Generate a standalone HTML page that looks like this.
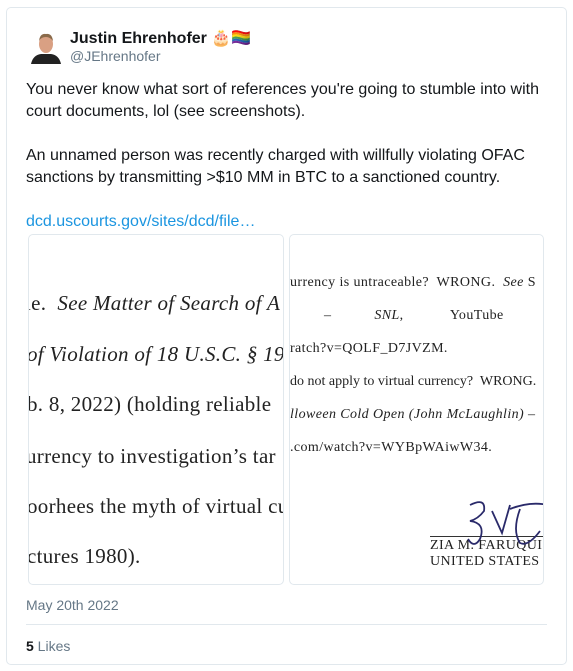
<!DOCTYPE html>
<html><head><meta charset="utf-8"><style>
body{margin:0;background:#fff;font-family:"Liberation Sans",Arial,sans-serif;width:573px;height:671px;position:relative;overflow:hidden}
.card{position:absolute;left:6px;top:7px;width:559px;height:656px;border:1px solid #e1e8ed;border-radius:5px}
.av{position:absolute;left:31px;top:30px;width:30px;height:34px}
.name{position:absolute;left:70px;top:28px;font-weight:bold;font-size:16px;color:#14171a}
.handle{position:absolute;left:70px;top:48px;font-size:14px;color:#657786}
.txt{position:absolute;left:26px;top:79px;font-size:16px;line-height:22px;color:#14171a;width:530px}
.link{color:#1b95e0}
.img{position:absolute;top:234px;height:349px;border:1px solid #e1e8ed;border-radius:5px;overflow:hidden;background:#fff;font-family:"Liberation Serif",serif;color:#222}
.l div{position:absolute;left:0;white-space:nowrap;font-size:21px;letter-spacing:0.3px}
.r div{position:absolute;left:0;white-space:nowrap;font-size:14px;letter-spacing:0.4px}
.date{position:absolute;left:26px;top:597px;font-size:14px;color:#657786}
.hr{position:absolute;left:26px;top:624px;width:521px;height:1px;background:#e1e8ed}
.likes{position:absolute;left:26px;top:638px;font-size:14px;color:#657786}
</style></head><body>
<div class="card"></div>
<svg class="av" viewBox="0 0 30 34"><rect width="30" height="34" fill="#fff"/><path d="M0 34 Q2 25 10 24 L20 24 Q28 25 30 34Z" fill="#222"/><ellipse cx="15" cy="14" rx="7" ry="9" fill="#d9a083"/><path d="M8 11 Q9 3 15 4 Q21 3 22 11 Q19 7 15 7 Q10 7 8 11Z" fill="#8a6a4a"/></svg>
<div class="name">Justin Ehrenhofer 🎂🏳️‍🌈</div>
<div class="handle">@JEhrenhofer</div>
<div class="txt">You never know what sort of references you're going to stumble into with court documents, lol (see screenshots).<br><br>An unnamed person was recently charged with willfully violating OFAC sanctions by transmitting &gt;$10 MM in BTC to a sanctioned country.<br><br><span class="link">dcd.uscourts.gov/sites/dcd/file…</span></div>
<div class="img l" style="left:28px;width:254px">
<div style="top:56px;left:-4px">le.&nbsp; <i>See Matter of Search of A</i></div>
<div style="top:107px;left:-2px"><i>of Violation of 18 U.S.C. § 19</i></div>
<div style="top:157px;left:-2px">b. 8, 2022) (holding reliable</div>
<div style="top:209px;left:-3px">urrency to investigation’s tar</div>
<div style="top:259px;left:-2px">oorhees the myth of virtual cu</div>
<div style="top:309px;left:-2px">ctures 1980).</div>
</div>
<div class="img r" style="left:289px;width:253px">
<div style="top:40px">urrency is untraceable?&nbsp; WRONG.&nbsp; <i>See</i> S</div>
<div style="top:73px;left:34px">–&nbsp;&nbsp;&nbsp;&nbsp;&nbsp;&nbsp;&nbsp;&nbsp;&nbsp;&nbsp;&nbsp;<i>SNL</i>,&nbsp;&nbsp;&nbsp;&nbsp;&nbsp;&nbsp;&nbsp;&nbsp;&nbsp;&nbsp;&nbsp; YouTube&nbsp;&nbsp;&nbsp;&nbsp;&nbsp;&nbsp;&nbsp;&nbsp;&nbsp;&nbsp;&nbsp; (C</div>
<div style="top:106px">ratch?v=QOLF_D7JVZM.</div>
<div style="top:139px;letter-spacing:0">do not apply to virtual currency?&nbsp; WRONG.</div>
<div style="top:172px"><i>lloween Cold Open (John McLaughlin) –</i></div>
<div style="top:205px">.com/watch?v=WYBpWAiwW34.</div>
<div style="top:301px;left:140px;width:120px;height:1px;background:#333"></div>
<div style="top:303px;left:140px">ZIA M. FARUQUI</div>
<div style="top:319px;left:140px">UNITED STATES</div>
<svg style="position:absolute;left:168px;top:262px" width="90" height="56"><path d="M12 8 Q28 0 26 14 Q20 22 12 24 Q28 26 22 42 Q16 52 10 42 M34 14 L44 36 L52 8 M52 12 Q72 4 90 8 M62 12 Q54 34 62 46 Q70 50 82 34" fill="none" stroke="#2a2a6a" stroke-width="1.8"/></svg>
</div>
<div class="date">May 20th 2022</div>
<div class="hr"></div>
<div class="likes"><b style="color:#14171a">5</b> Likes</div>
</body></html>
